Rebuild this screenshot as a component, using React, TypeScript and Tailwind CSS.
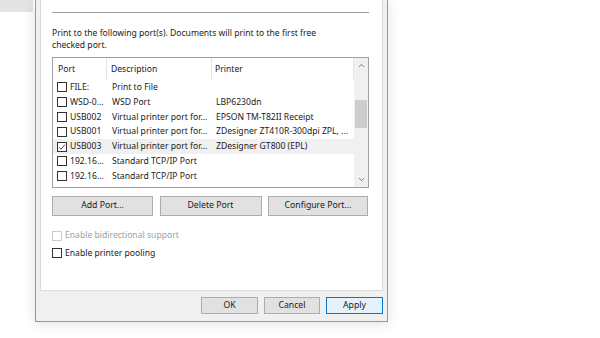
import { ChevronUp, ChevronDown } from 'lucide-react';

const FONT = { fontFamily: '"Noto Sans", "Open Sans", Arial, sans-serif' };

const ports = [
  { port: 'FILE:', desc: 'Print to File', printer: '', checked: false },
  { port: 'WSD-0...', desc: 'WSD Port', printer: 'LBP6230dn', checked: false },
  { port: 'USB002', desc: 'Virtual printer port for...', printer: 'EPSON TM-T82II Receipt', checked: false },
  { port: 'USB001', desc: 'Virtual printer port for...', printer: 'ZDesigner ZT410R-300dpi ZPL, ...', checked: false },
  { port: 'USB003', desc: 'Virtual printer port for...', printer: 'ZDesigner GT800 (EPL)', checked: true },
  { port: '192.16...', desc: 'Standard TCP/IP Port', printer: '', checked: false },
  { port: '192.16...', desc: 'Standard TCP/IP Port', printer: '', checked: false },
];

function Box({ checked, disabled }: { checked?: boolean; disabled?: boolean }) {
  return (
    <span
      className={`flex h-[10px] w-[10px] shrink-0 items-center justify-center border bg-white ${
        disabled ? 'border-[#cccccc]' : 'border-[#333333]'
      }`}
    >
      {checked && (
        <svg width="8" height="8" viewBox="0 0 8 8" fill="none">
          <path d="M1 4.2 L3 6.2 L7 1.6" stroke="#333" strokeWidth="0.9" />
        </svg>
      )}
    </span>
  );
}

function Btn({ label, primary }: { label: string; primary?: boolean }) {
  return (
    <div
      className={`flex items-center justify-center border text-[8.7px] text-[#1a1a1a] ${
        primary ? 'border-[#0078d7] bg-[#e5f1fb]' : 'border-[#adadad] bg-[#e1e1e1]'
      }`}
    >
      {label}
    </div>
  );
}

export default function App() {
  return (
    <div className="flex h-[338px] w-[600px] items-start overflow-hidden bg-white" style={FONT}>
      {/* window behind */}
      <div className="w-[33px] shrink-0">
        <div className="h-[12px] bg-[#e4e4e4]" />
      </div>

      {/* dialog */}
      <div className="ml-[2px] flex h-[322px] w-[353px] shrink-0 flex-col border-x border-b border-[#d97b7b] bg-[#f0f0f0] shadow-[0_2px_12px_rgba(0,0,0,0.12)]">
        <div className="ml-[4px] mr-[4px] flex h-[291px] flex-col border-x border-b border-[#d9d9d9] bg-white pl-[11px] text-[#1a1a1a]">
          <div className="mt-[12px] h-px w-[317px] bg-[#a0a0a0]" />

          <p className="mt-[15px] text-[8.6px] leading-[11.5px]">
            Print to the following port(s). Documents will print to the first free
            <br />
            checked port.
          </p>

          {/* list */}
          <div className="mt-[6px] flex h-[131px] w-[317px] border border-[#a0a0a0] text-[8.6px]">
            <div className="flex flex-1 flex-col">
              <div className="flex h-[22px] items-center">
                <div className="flex h-full w-[54px] items-center border-r border-[#e5e5e5] pl-[5px]">Port</div>
                <div className="flex h-full w-[105px] items-center border-r border-[#e5e5e5] pl-[4px]">Description</div>
                <div className="flex h-full flex-1 items-center border-r border-[#e5e5e5] pl-[3px]">Printer</div>
              </div>
              {ports.map((p, i) => (
                <div key={i} className={`flex h-[14.8px] items-center ${p.checked ? 'bg-[#f0f0f0]' : ''}`}>
                  <div className="flex w-[54px] items-center gap-[3px] pl-[4px] whitespace-nowrap">
                    <Box checked={p.checked} />
                    <span>{p.port}</span>
                  </div>
                  <div className="w-[105px] pl-[5px] whitespace-nowrap">{p.desc}</div>
                  <div className="flex-1 pl-[4px] whitespace-nowrap">{p.printer}</div>
                </div>
              ))}
            </div>
            {/* scrollbar */}
            <div className="flex w-[14px] flex-col bg-[#f0f0f0]">
              <div className="flex h-[15px] items-center justify-center">
                <ChevronUp size={9} strokeWidth={2.2} color="#606060" />
              </div>
              <div className="flex-1">
                <div className="mx-auto mt-[27px] h-[28px] w-[12px] bg-[#cdcdcd]" />
              </div>
              <div className="flex h-[15px] items-center justify-center">
                <ChevronDown size={9} strokeWidth={2.2} color="#606060" />
              </div>
            </div>
          </div>

          <div className="mt-[8px] grid h-[20px] w-[316px] grid-cols-[101px_102px_100px] gap-x-[6.5px]">
            <Btn label="Add Port..." />
            <Btn label="Delete Port" />
            <Btn label="Configure Port..." />
          </div>

          <div className="mt-[12px] flex h-[15px] items-center gap-[3px] text-[8.6px] text-[#a0a0a0]">
            <Box disabled />
            <span>Enable bidirectional support</span>
          </div>
          <div className="mt-[2.5px] flex h-[15px] items-center gap-[3px] text-[8.6px]">
            <Box />
            <span>Enable printer pooling</span>
          </div>
        </div>

        <div className="mt-[6px] mr-[4px] flex h-[17px] justify-end gap-[6px]">
          <div className="flex w-[57px]"><div className="flex-1 grid"><Btn label="OK" /></div></div>
          <div className="flex w-[56px]"><div className="flex-1 grid"><Btn label="Cancel" /></div></div>
          <div className="flex w-[57px]"><div className="flex-1 grid"><Btn label="Apply" primary /></div></div>
        </div>
      </div>
    </div>
  );
}
